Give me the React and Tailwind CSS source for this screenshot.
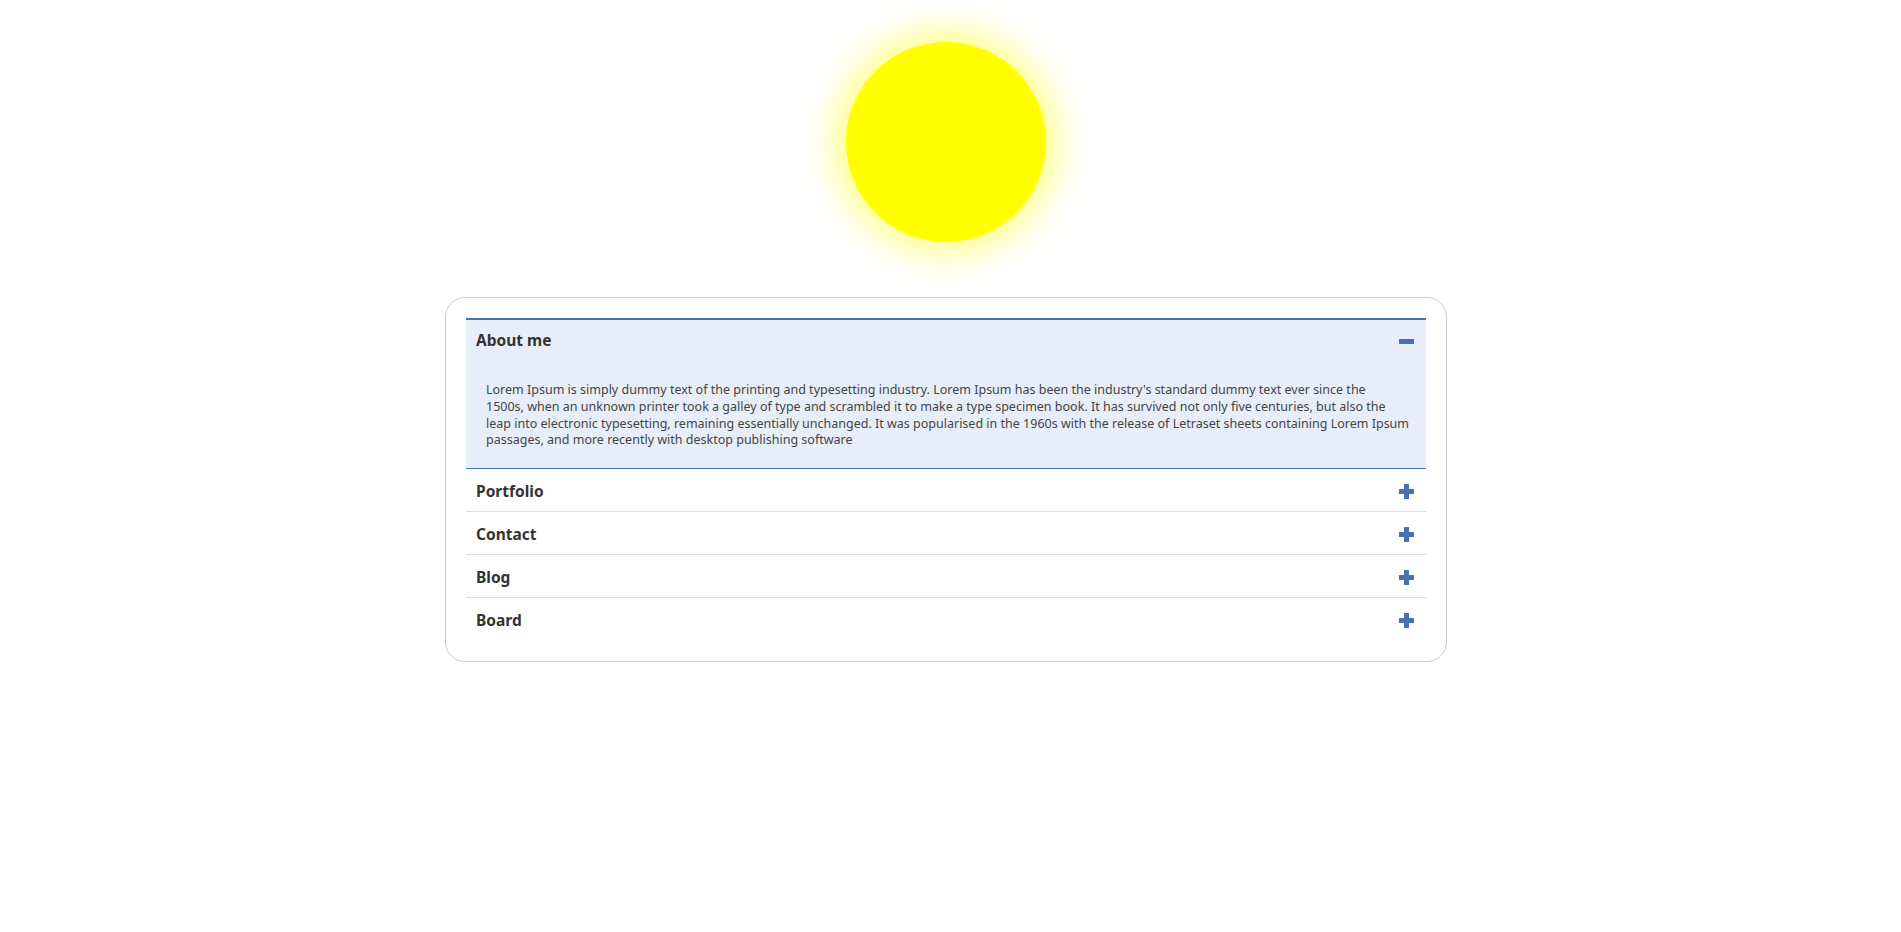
import { useState } from 'react'

const aboutLines = [
  "Lorem Ipsum is simply dummy text of the printing and typesetting industry. Lorem Ipsum has been the industry's standard dummy text ever since the",
  '1500s, when an unknown printer took a galley of type and scrambled it to make a type specimen book. It has survived not only five centuries, but also the',
  'leap into electronic typesetting, remaining essentially unchanged. It was popularised in the 1960s with the release of Letraset sheets containing Lorem Ipsum',
  'passages, and more recently with desktop publishing software',
]

const items = [
  { id: 'about', title: 'About me', lines: aboutLines },
  { id: 'portfolio', title: 'Portfolio', lines: ['Portfolio content'] },
  { id: 'contact', title: 'Contact', lines: ['Contact content'] },
  { id: 'blog', title: 'Blog', lines: ['Blog content'] },
  { id: 'board', title: 'Board', lines: ['Board content'] },
]

function Icon({ open }) {
  return (
    <svg width="15" height="15" viewBox="0 0 15 15" className="shrink-0">
      <rect x="0" y="5" width="15" height="5" rx="0.5" fill="#4a70b0" />
      {!open && <rect x="5" y="0" width="5" height="15" rx="0.5" fill="#4a70b0" />}
    </svg>
  )
}

export default function App() {
  const [openId, setOpenId] = useState('about')

  return (
    <div className="w-[1892px] min-h-[932px] bg-white flex flex-col items-center pt-[42px]" style={{ fontFamily: '"Noto Sans", "Open Sans", sans-serif' }}>
      <div className="w-[200px] h-[200px] rounded-full bg-[#ffff00] shadow-[0_0_34px_10px_rgba(255,255,0,0.5)]" />

      <div className="mt-[55px] w-[1002px] border border-[#cccccc] rounded-[20px] p-5">
        <div className="border-t-2 border-[#4a72b5]">
          {items.map((item, i) => {
            const isOpen = openId === item.id
            const last = i === items.length - 1
            return (
              <div
                key={item.id}
                className={`border-b ${isOpen ? 'bg-[#e8eef9] border-[#4a72b5]' : last ? 'border-transparent' : 'border-[#dddddd]'}`}
              >
                <button
                  onClick={() => setOpenId(isOpen ? null : item.id)}
                  className={`w-full h-[42px] flex items-center justify-between pl-[10px] pr-[12px] text-left ${isOpen ? '' : 'pt-[3px]'}`}
                >
                  <span className={`text-[15.5px] font-bold text-[#333333] ${isOpen ? '' : 'pt-[1px]'}`}>{item.title}</span>
                  <Icon open={isOpen} />
                </button>
                {isOpen && (
                  <div className="px-5 pt-5 pb-[19px] text-[12.5px] leading-[16.75px] text-[#444444] whitespace-nowrap">
                    {item.lines.map((line, j) => (
                      <div key={j}>{line}</div>
                    ))}
                  </div>
                )}
              </div>
            )
          })}
        </div>
      </div>
    </div>
  )
}
